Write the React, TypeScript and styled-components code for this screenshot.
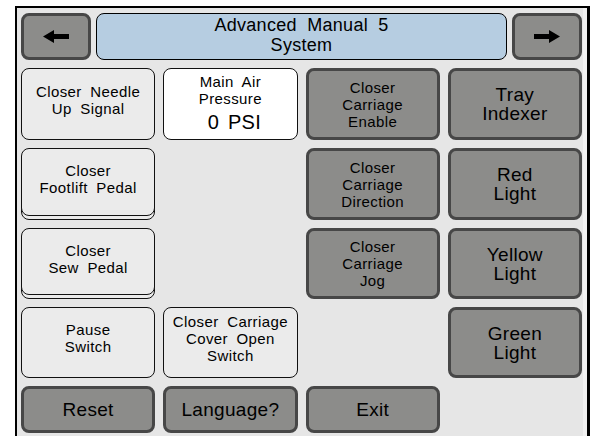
import React from "react";
import styled, { createGlobalStyle, css } from "styled-components";

const GlobalStyle = createGlobalStyle`
    html, body {
        margin: 0;
        padding: 0;
        background: #ffffff;
        overflow: hidden;
    }
    body {
        font-family: "Liberation Sans", Arial, sans-serif;
        color: #000;
    }
`

const Frame = styled.div`
    margin: 6px 0 0 15px;
    width: 570px;
    height: 430px;
    box-sizing: content-box;
    border-left: 2px solid #000;
    border-top: 2px solid #000;
    border-right: 3px solid #000;
    background: #e6e6e6;
    box-shadow: inset -4px 0 0 #f1f1f1;
    overflow: hidden;
`

const Screen = styled.div`
    isolation: isolate;
    padding: 5px 5px 0 4px;
    display: grid;
    grid-template-columns: repeat(4, 1fr);
    grid-template-rows: 47px 72px 72px 71px 71px 47px;
    column-gap: 8px;
    row-gap: 8px;
`

const Header = styled.div`
    grid-column: 1 / -1;
    display: grid;
    grid-template-columns: 70px 1fr 70px;
    gap: 5px;
`

const Title = styled.div`
    background: #b6cde1;
    border: 1px solid #000;
    border-radius: 8px;
    display: flex;
    flex-direction: column;
    align-items: center;
    justify-content: center;
    padding-bottom: 3px;
    font-size: 18px;
    line-height: 20px;
    word-spacing: 5px;
    letter-spacing: 0.3px;
`

type Variant = "dark" | "light" | "white"

const Key = styled.button<{ $variant?: Variant; $big?: boolean; $stacked?: boolean; $top?: boolean }>`
    position: relative;
    margin: 0;
    padding: 0 4px;
    box-sizing: border-box;
    display: flex;
    flex-direction: column;
    align-items: center;
    justify-content: ${p => (p.$top ? "flex-start" : "center")};
    font-family: "Liberation Sans", Arial, sans-serif;
    color: #000;
    text-align: center;
    border-radius: 8px;
    font-size: ${p => (p.$big ? "19px" : "15px")};
    line-height: ${p => (p.$big ? "19px" : "17px")};
    letter-spacing: ${p => (p.$big ? "0.3px" : "0.4px")};
    word-spacing: ${p => (p.$big ? "2px" : "4px")};

    ${p => p.$variant === "dark" && css`
        background: #8c8c8a;
        border: 3px solid #474747;
    `}
    ${p => p.$variant === "light" && css`
        background: #ebebeb;
        border: 1px solid #111;
        padding-bottom: 9px;
    `}
    ${p => p.$variant === "white" && css`
        background: #ffffff;
        border: 1px solid #111;
        padding-top: 4px;
    `}
    ${p => p.$stacked && css`
        margin-bottom: 4px;
        padding-bottom: 6px;
        &::after {
            content: "";
            position: absolute;
            left: -1px;
            right: -1px;
            top: 3px;
            bottom: -5px;
            border: 1px solid #111;
            border-radius: 8px;
            background: #ebebeb;
            z-index: -1;
        }
    `}
`

const Reading = styled.span`
    margin-top: 5px;
    padding-left: 8px;
    font-size: 20px;
    line-height: 20px;
    letter-spacing: 0.3px;
    word-spacing: 3px;
`

const Blank = styled.div``

const Arrow = ({ dir }: { dir: "left" | "right" }) => (
    <svg width="26" height="13" viewBox="0 0 26 13" style={dir === "right" ? { transform: "scaleX(-1)" } : undefined}>
        <path d="M0 6.5 L11 0 L11 4 L26 4 L26 9 L11 9 L11 13 Z" fill="#000" />
    </svg>
)

const App = () => {
    return (
        <>
            <GlobalStyle />
            <Frame>
                <Screen>
                    <Header>
                        <Key $variant="dark"><Arrow dir="left" /></Key>
                        <Title>
                            <span>Advanced Manual 5</span>
                            <span>System</span>
                        </Title>
                        <Key $variant="dark"><Arrow dir="right" /></Key>
                    </Header>

                    <Key $variant="light">Closer Needle<br />Up Signal</Key>
                    <Key $variant="white" $top>
                        Main Air<br />Pressure
                        <Reading>0 PSI</Reading>
                    </Key>
                    <Key $variant="dark">Closer<br />Carriage<br />Enable</Key>
                    <Key $variant="dark" $big>Tray<br />Indexer</Key>

                    <Key $variant="light" $stacked>Closer<br />Footlift Pedal</Key>
                    <Blank />
                    <Key $variant="dark">Closer<br />Carriage<br />Direction</Key>
                    <Key $variant="dark" $big>Red<br />Light</Key>

                    <Key $variant="light" $stacked>Closer<br />Sew Pedal</Key>
                    <Blank />
                    <Key $variant="dark">Closer<br />Carriage<br />Jog</Key>
                    <Key $variant="dark" $big>Yellow<br />Light</Key>

                    <Key $variant="light">Pause<br />Switch</Key>
                    <Key $variant="light">Closer Carriage<br />Cover Open<br />Switch</Key>
                    <Blank />
                    <Key $variant="dark" $big>Green<br />Light</Key>

                    <Key $variant="dark" $big>Reset</Key>
                    <Key $variant="dark" $big>Language?</Key>
                    <Key $variant="dark" $big>Exit</Key>
                    <Blank />
                </Screen>
            </Frame>
        </>
    )
}

export default App
